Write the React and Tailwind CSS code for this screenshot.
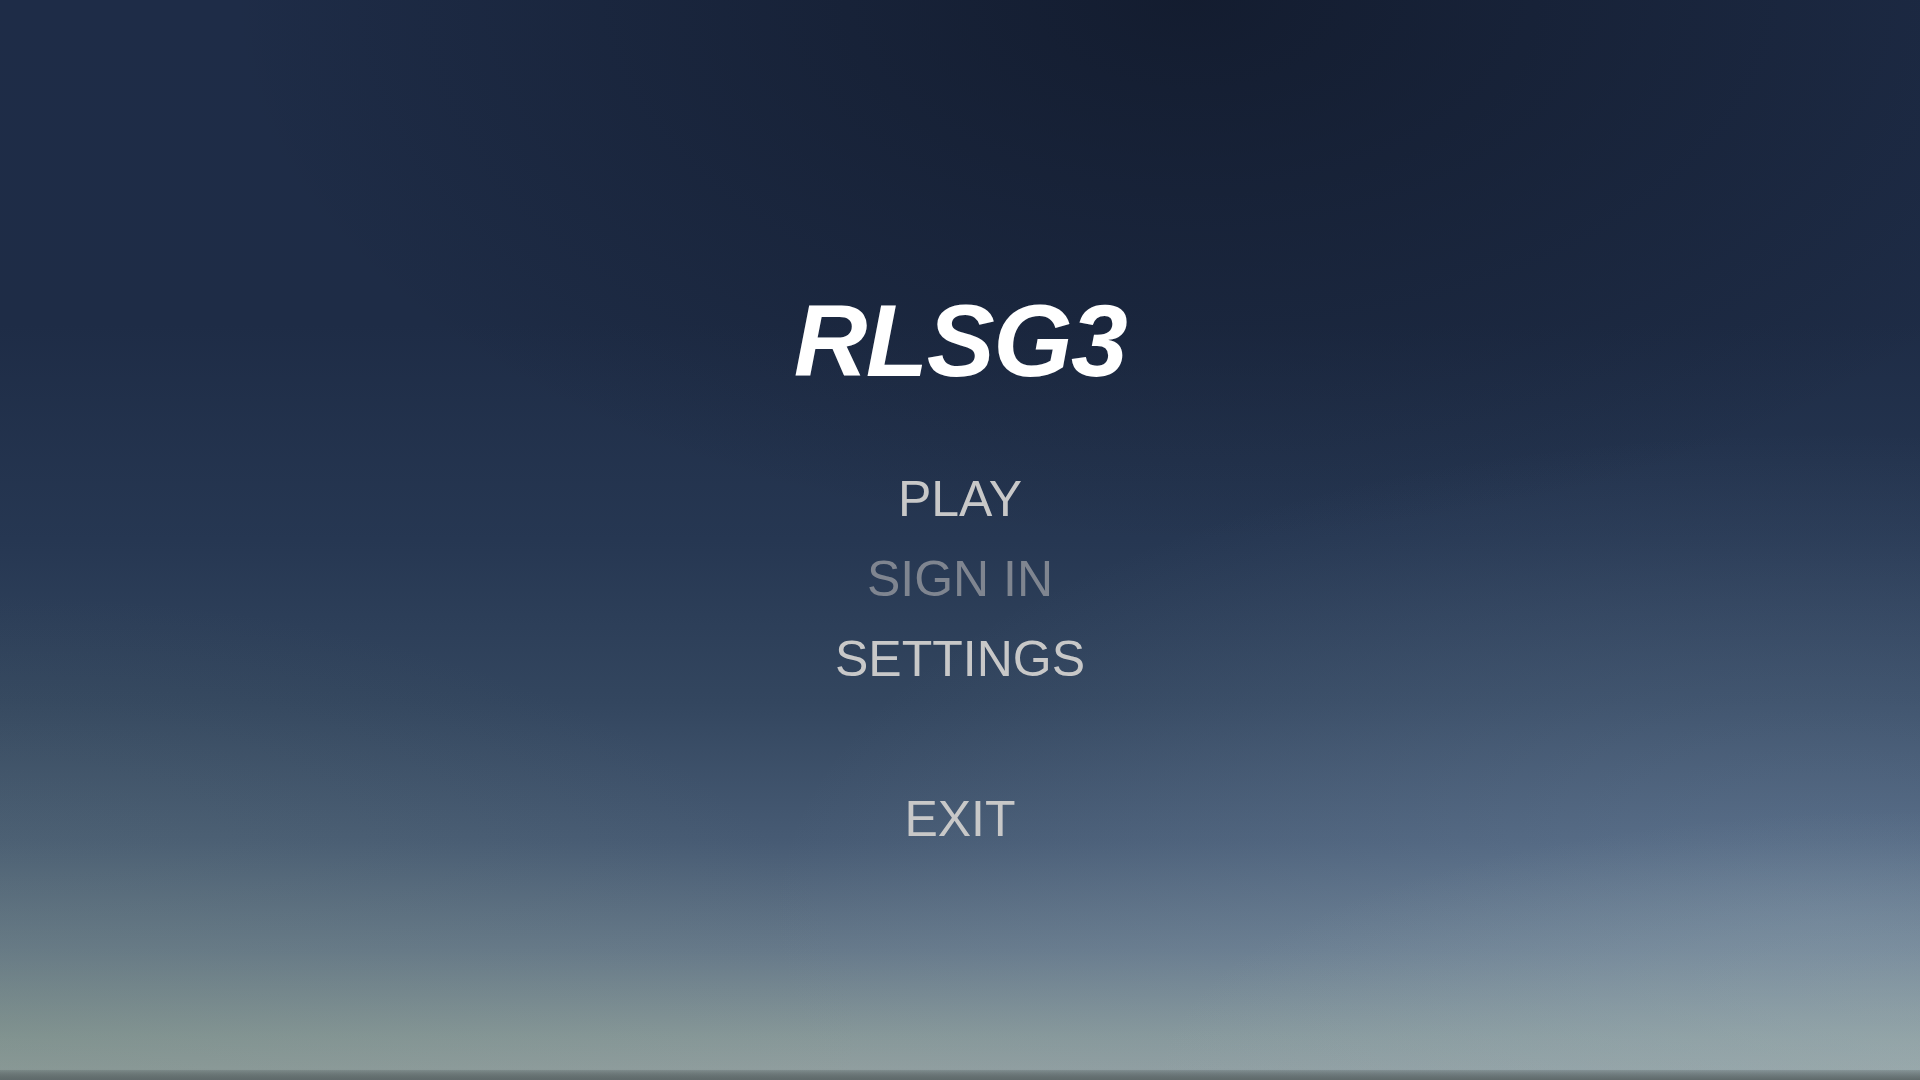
import { useState } from "react";

const items = [
  { label: "PLAY", enabled: true },
  { label: "SIGN IN", enabled: false },
  { label: "SETTINGS", enabled: true },
];

export default function App() {
  const [hovered, setHovered] = useState(null);

  return (
    <div className="relative h-[1080px] w-full overflow-hidden font-['Liberation_Sans',Arial,sans-serif] bg-[linear-gradient(to_bottom,#1e2c47_0%,#1e2c46_30%,#263752_50%,#33465f_65%,#475b74_78%,#66798a_88%,#879899_96%,#909e9f_99%,#6c7777_100%)]">
      {/* sky shading */}
      <div className="absolute inset-0 bg-[radial-gradient(ellipse_50%_50%_at_62%_0%,rgba(12,18,32,0.6),rgba(12,18,32,0)_100%)]" />
      <div className="absolute inset-0 bg-[radial-gradient(ellipse_55%_45%_at_95%_85%,rgba(140,165,195,0.3),rgba(140,165,195,0)_100%)]" />
      <div className="absolute inset-0 bg-[radial-gradient(ellipse_40%_25%_at_100%_100%,rgba(170,185,180,0.35),rgba(170,185,180,0)_100%)]" />
      <div className="absolute inset-0 bg-[radial-gradient(ellipse_45%_40%_at_0%_95%,rgba(110,130,115,0.25),rgba(110,130,115,0)_100%)]" />
      <div className="absolute bottom-0 left-0 right-0 h-[10px] bg-[linear-gradient(to_bottom,rgba(95,105,108,0.3),#5f6a6b)]" />

      <div className="relative flex flex-col items-center pt-[290px]">
        <h1 className="text-[102px] leading-none font-bold italic tracking-[-1.5px] text-white">
          RLSG3
        </h1>
        <ul className="mt-[67px] flex flex-col items-center">
          {items.map((item) => (
            <li
              key={item.label}
              onMouseEnter={() => setHovered(item.label)}
              onMouseLeave={() => setHovered(null)}
              className={
                item.enabled
                  ? "h-20 text-[50px] leading-[80px] text-[#c8c8c8] cursor-pointer"
                  : "h-20 text-[50px] leading-[80px] text-[#7f8590]"
              }
            >
              {item.label}
            </li>
          ))}
          <li className="mt-20 h-20 text-[50px] leading-[80px] text-[#c8c8c8] cursor-pointer">
            EXIT
          </li>
        </ul>
      </div>
    </div>
  );
}
